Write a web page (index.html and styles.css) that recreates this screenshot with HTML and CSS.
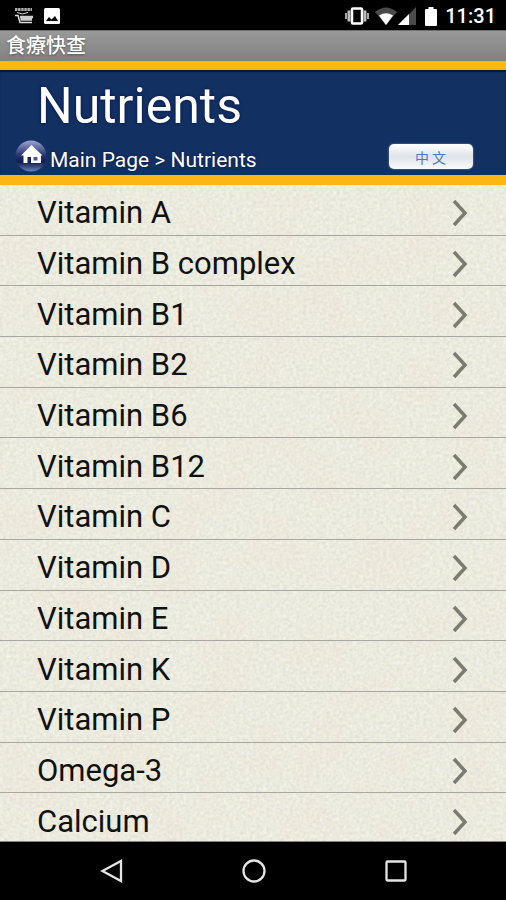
FILE: index.html
```html
<!DOCTYPE html>
<html lang="en">
<head>
    <meta charset="UTF-8">
    <meta name="viewport" content="width=device-width, initial-scale=1.0">
    <title>食療快查</title>
    <link rel="stylesheet" href="styles.css">
</head>
<body>
    <div class="status-bar">
        <div class="status-left">
            <svg width="20" height="18" viewBox="0 0 20 18" fill="none" stroke="#aaa">
                <path d="M1 2.5h17" stroke-width="3" stroke-dasharray="2.5 .6"/>
                <path d="M3 5.5q5 3 11 0" stroke="#ddd"/>
                <path d="M1 8.5h3l2 7h12" stroke="#ddd" stroke-width="1.5"/>
                <path d="M6 10h13M6.500 12.500h11.500" stroke="#ccc" stroke-width="2.500"/>
            </svg>
            <svg width="16" height="16" viewBox="0 0 16 16">
                <rect width="16" height="16" rx="1.500" fill="#fff"/>
                <path d="M2 13l3-4 2.500 2.500L11 8l3 5z" fill="#000"/>
            </svg>
        </div>
        <div class="status-right">
            <svg width="24" height="18" viewBox="0 0 24 18" fill="none">
                <path d="M1 6v6M23 6v6" stroke="#ddd" stroke-width="1.500"/>
                <path d="M4 3.500v11M20 3.500v11" stroke="#bbb" stroke-width="3"/>
                <rect x="7" y="1.500" width="10" height="15" rx="1" stroke="#fff" stroke-width="2.500"/>
            </svg>
            <svg class="wifi" width="22" height="18" viewBox="0 0 22 18">
                <path d="M0 5Q11-4 22 5L11 18z" fill="#4a4a4a"/>
                <path d="M4 8.500Q11 4 18 8.500L11 18z" fill="#fff"/>
            </svg>
            <svg class="signal" width="18" height="18" viewBox="0 0 18 18">
                <path d="M0 18L18 0v18z" fill="#4a4a4a"/>
                <path d="M0 18L11 7v11z" fill="#fff"/>
            </svg>
            <svg width="12" height="19" viewBox="0 0 12 19">
                <path d="M3.500 0h5v2H11q1 0 1 1v15q0 1-1 1H1q-1 0-1-1V3q0-1 1-1h2.500z" fill="#fff"/>
            </svg>
            <span class="clock">11:31</span>
        </div>
    </div>

    <div class="app-title" lang="zh-Hant">食療快查</div>

    <header class="header">
        <h1>Nutrients</h1>
        <div class="header-row">
            <nav class="breadcrumb">
                <a href="#" class="home" aria-label="Home">
                    <svg width="32" height="34" viewBox="0 0 32 34">
                        <defs>
                            <linearGradient id="ball" x1="0" y1="0" x2="0" y2="1">
                                <stop offset="0" stop-color="#9da8d0"/>
                                <stop offset=".22" stop-color="#6470a5"/>
                                <stop offset=".48" stop-color="#26336f"/>
                                <stop offset=".7" stop-color="#101d50"/>
                                <stop offset="1" stop-color="#6e80b5"/>
                            </linearGradient>
                        </defs>
                        <circle cx="17" cy="16" r="15.500" fill="url(#ball)"/>
                        <path d="M17.500 5L7 15.500h2.500V23H27v-7.500h1.500z" fill="#fff"/>
                        <path d="M13.500 23v-6H17v6z" fill="#17275c"/>
                        <path d="M19.500 17h4v3.500h-4z" fill="#4b588a"/>
                    </svg>
                </a>
                <div class="trail"><a href="#">Main Page</a> &gt; Nutrients</div>
            </nav>
            <button class="lang-button" lang="zh-Hant">中 文</button>
        </div>
    </header>

    <main class="list-area">
        <svg class="paper" width="100%" height="100%" aria-hidden="true">
            <filter id="grain" x="0" y="0" width="100%" height="100%" color-interpolation-filters="sRGB">
                <feTurbulence type="fractalNoise" baseFrequency=".3" numOctaves="3" seed="4"/>
                <feColorMatrix values=".11 0 0 0 .868  .1 .02 0 0 .862  .1 0 .05 0 .798  0 0 0 0 1"/>
            </filter>
            <filter id="blotch" x="0" y="0" width="100%" height="100%" color-interpolation-filters="sRGB">
                <feTurbulence type="fractalNoise" baseFrequency=".02" numOctaves="3" seed="9"/>
                <feColorMatrix values="0 0 0 0 .95  0 0 0 0 .83  0 0 0 0 .8  1.6 0 0 0 -.7"/>
            </filter>
            <rect width="100%" height="100%" filter="url(#grain)"/>
            <rect width="100%" height="100%" filter="url(#blotch)" opacity=".25"/>
        </svg>
        <ul class="list">
            <li><a href="#">Vitamin A <svg class="arrow" viewBox="0 0 16 28"><path d="M2 2l11 12L2 26"/></svg></a></li>
            <li><a href="#">Vitamin B complex <svg class="arrow" viewBox="0 0 16 28"><path d="M2 2l11 12L2 26"/></svg></a></li>
            <li><a href="#">Vitamin B1 <svg class="arrow" viewBox="0 0 16 28"><path d="M2 2l11 12L2 26"/></svg></a></li>
            <li><a href="#">Vitamin B2 <svg class="arrow" viewBox="0 0 16 28"><path d="M2 2l11 12L2 26"/></svg></a></li>
            <li><a href="#">Vitamin B6 <svg class="arrow" viewBox="0 0 16 28"><path d="M2 2l11 12L2 26"/></svg></a></li>
            <li><a href="#">Vitamin B12 <svg class="arrow" viewBox="0 0 16 28"><path d="M2 2l11 12L2 26"/></svg></a></li>
            <li><a href="#">Vitamin C <svg class="arrow" viewBox="0 0 16 28"><path d="M2 2l11 12L2 26"/></svg></a></li>
            <li><a href="#">Vitamin D <svg class="arrow" viewBox="0 0 16 28"><path d="M2 2l11 12L2 26"/></svg></a></li>
            <li><a href="#">Vitamin E <svg class="arrow" viewBox="0 0 16 28"><path d="M2 2l11 12L2 26"/></svg></a></li>
            <li><a href="#">Vitamin K <svg class="arrow" viewBox="0 0 16 28"><path d="M2 2l11 12L2 26"/></svg></a></li>
            <li><a href="#">Vitamin P <svg class="arrow" viewBox="0 0 16 28"><path d="M2 2l11 12L2 26"/></svg></a></li>
            <li><a href="#">Omega-3 <svg class="arrow" viewBox="0 0 16 28"><path d="M2 2l11 12L2 26"/></svg></a></li>
            <li><a href="#">Calcium <svg class="arrow" viewBox="0 0 16 28"><path d="M2 2l11 12L2 26"/></svg></a></li>
        </ul>
    </main>

    <div class="nav-bar">
        <button aria-label="Back">
            <svg width="26" height="26" viewBox="0 0 26 26"><path d="M22 3v20L3.500 13z"/></svg>
        </button>
        <button aria-label="Home screen">
            <svg width="26" height="26" viewBox="0 0 26 26"><circle cx="13" cy="13" r="10.500"/></svg>
        </button>
        <button aria-label="Recent apps">
            <svg width="26" height="26" viewBox="0 0 26 26"><rect x="3.500" y="3.500" width="19" height="19" rx="1"/></svg>
        </button>
    </div>
</body>
</html>
```

FILE: styles.css
```css
* {
    box-sizing: border-box;
}
body {
    margin: 0;
    min-height: 100vh;
    display: flex;
    flex-direction: column;
    background-color: #000;
    font-family: Roboto, "Noto Sans CJK TC", sans-serif;
}
a {
    color: inherit;
    text-decoration: none;
}
button {
    border: none;
    padding: 0;
    cursor: pointer;
}
svg {
    display: block;
    flex: none;
}

/* status bar */
.status-bar {
    height: 30px;
    padding: 2px 10px 0 14px;
    display: flex;
    justify-content: space-between;
    color: #fff;
}
.status-left,
.status-right {
    display: flex;
    align-items: center;
}
.status-left {
    gap: 10px;
}
.wifi {
    margin-left: 6px;
}
.signal {
    margin: 0 9px 0 1px;
}
.clock {
    margin-left: 8px;
    font-size: 20px;
    font-weight: 500;
}

.app-title {
    height: 31px;
    padding-left: 6px;
    border-top: 1px solid #6d6d6d;
    background: linear-gradient(#999, #808080);
    color: #fff;
    font-size: 20px;
    line-height: 30px;
    font-weight: 500;
    text-shadow: 0 1px 2px #555;
}

/* header */
.header {
    border-top: 9px solid #fdb714;
    border-bottom: 10px solid #fdb714;
    background-color: #123062;
    box-shadow: inset 0 2px 1px #0b1744;
    color: #fff;
}
.header h1 {
    margin: 0;
    padding: 8px 0 0 37px;
    font-size: 50px;
    line-height: 56px;
    font-weight: 400;
    text-shadow: 0 0 3px #05104a;
}
.header-row {
    height: 41px;
    padding: 4px 33px 0 14px;
    display: flex;
    align-items: center;
    justify-content: space-between;
}
.breadcrumb {
    display: flex;
    align-items: center;
    gap: 4px;
    font-size: 21px;
    text-shadow: 0 0 2px #05104a;
}
.trail {
    padding-top: 7px;
}
.lang-button {
    width: 84px;
    height: 25px;
    padding-right: 1px;
    border-radius: 5px;
    background: linear-gradient(#fff, #dfe4e8 50%, #fafafa);
    box-shadow: 0 0 2px #8fa0b8;
    color: #4a78c4;
    font-family: "Noto Sans CJK TC", sans-serif;
    font-size: 14px;
    line-height: 24px;
}

/* list */
.list-area {
    flex: 1;
    position: relative;
    display: flex;
    overflow: hidden;
    background-color: #edede0;
    border-bottom: 1px solid #86867c;
}
.paper {
    position: absolute;
    inset: 0;
}
.list {
    flex: 1;
    position: relative;
    margin: 0 0 -3px;
    padding: 0;
    list-style: none;
    display: flex;
    flex-direction: column;
}
.list li {
    flex: 1;
    display: flex;
    border-bottom: 1px solid #a9a89f;
}
.list a {
    flex: 1;
    padding: 7px 38px 0 37px;
    display: flex;
    align-items: center;
    justify-content: space-between;
    color: #111;
    font-size: 31px;
    line-height: 36px;
}
.arrow {
    width: 16px;
    height: 28px;
    fill: none;
    stroke: #7b7b72;
    stroke-width: 3.5;
}

/* navigation bar */
.nav-bar {
    height: 58px;
    padding: 0 39px 0 41px;
    display: flex;
}
.nav-bar button {
    flex: 1;
    display: flex;
    align-items: center;
    justify-content: center;
    background: none;
}
.nav-bar svg {
    fill: none;
    stroke: #e4e4e4;
    stroke-width: 2.3;
}
```
